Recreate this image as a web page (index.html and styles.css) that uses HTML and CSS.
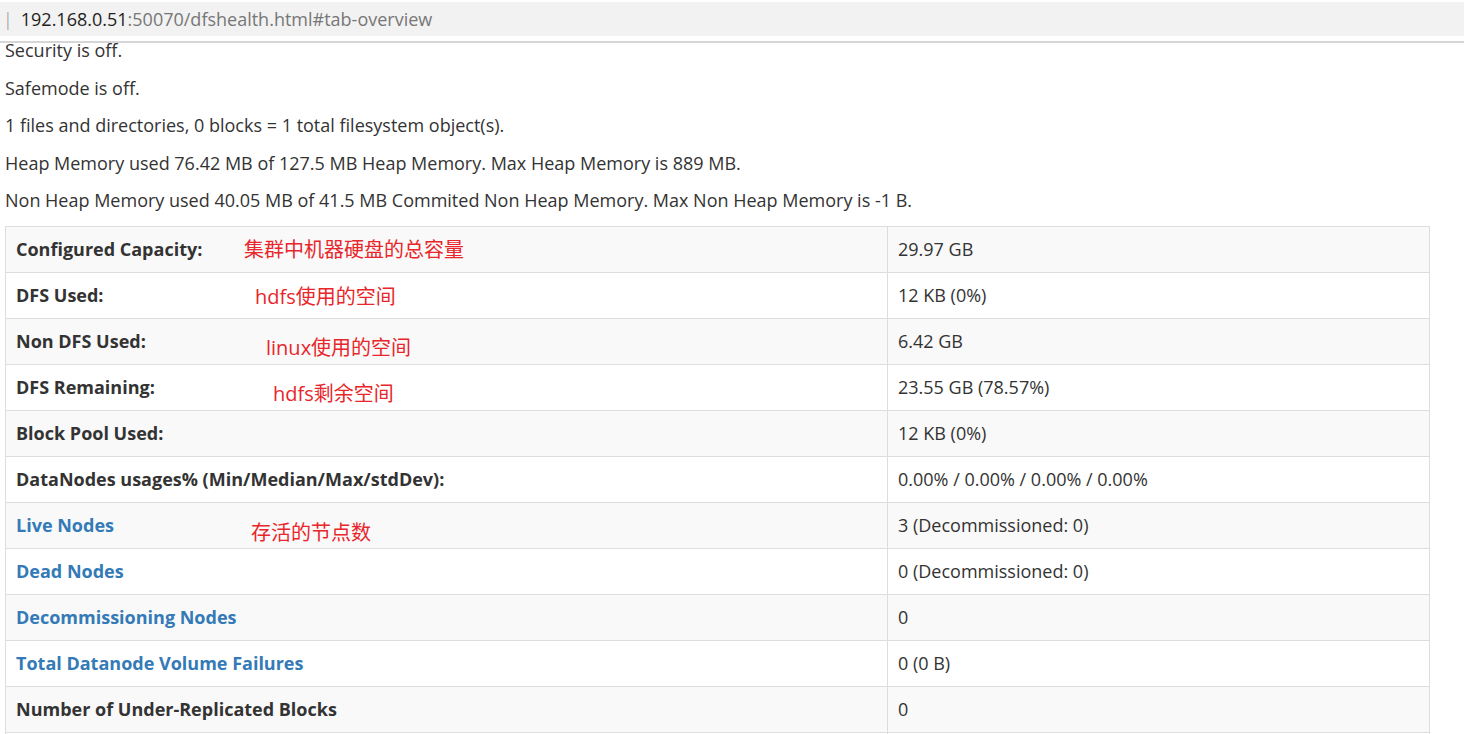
FILE: index.html
```html
<!DOCTYPE html>
<html lang="en">
<head>
    <meta charset="UTF-8">
    <meta name="viewport" content="width=device-width, initial-scale=1.0">
    <title>Namenode information</title>
    <link rel="stylesheet" href="styles.css">
</head>
<body>

    <div id="addressbar">
        <div class="url-field">
            <span class="caret">|</span>
            <span class="host">192.168.0.51</span><span class="path">:50070/dfshealth.html#tab-overview</span>
        </div>
    </div>

    <div id="viewport">
        <div id="overview">
            <p>Security is off.</p>
            <p>Safemode is off.</p>
            <p>1 files and directories, 0 blocks = 1 total filesystem object(s).</p>
            <p>Heap Memory used 76.42 MB of 127.5 MB Heap Memory. Max Heap Memory is 889 MB.</p>
            <p>Non Heap Memory used 40.05 MB of 41.5 MB Commited Non Heap Memory. Max Non Heap Memory is -1 B.</p>

            <div class="summary">
                <table class="table">
                    <tr><th>Configured Capacity:</th><td>29.97 GB</td></tr>
                    <tr><th>DFS Used:</th><td>12 KB (0%)</td></tr>
                    <tr><th>Non DFS Used:</th><td>6.42 GB</td></tr>
                    <tr><th>DFS Remaining:</th><td>23.55 GB (78.57%)</td></tr>
                    <tr><th>Block Pool Used:</th><td>12 KB (0%)</td></tr>
                    <tr><th>DataNodes usages% (Min/Median/Max/stdDev):</th><td>0.00% / 0.00% / 0.00% / 0.00%</td></tr>
                    <tr><th><a href="#tab-datanode">Live Nodes</a></th><td>3 (Decommissioned: 0)</td></tr>
                    <tr><th><a href="#tab-datanode">Dead Nodes</a></th><td>0 (Decommissioned: 0)</td></tr>
                    <tr><th><a href="#tab-datanode">Decommissioning Nodes</a></th><td>0</td></tr>
                    <tr><th><a href="#tab-datanode-volume-failures">Total Datanode Volume Failures</a></th><td>0 (0 B)</td></tr>
                    <tr><th>Number of Under-Replicated Blocks</th><td>0</td></tr>
                    <tr><th>Number of Blocks Pending Deletion</th><td>0</td></tr>
                </table>

                <!-- hand-written notes on the screenshot -->
                <span class="note" style="left: 239px; top: 11px;">集群中机器硬盘的总容量</span>
                <span class="note" style="left: 250px; top: 58px;">hdfs使用的空间</span>
                <span class="note" style="left: 261px; top: 109px;">linux使用的空间</span>
                <span class="note" style="left: 268px; top: 155px;">hdfs剩余空间</span>
                <span class="note" style="left: 246px; top: 294px;">存活的节点数</span>
            </div>
        </div>
    </div>

</body>
</html>
```

FILE: styles.css
```css
html, body {
    margin: 0;
    padding: 0;
    height: 100%;
    overflow: hidden;
    background-color: #fff;
}

body {
    font-family: 'Open Sans', 'Noto Sans CJK SC', sans-serif;
    font-size: 18px;
    line-height: 25px;
    color: #333;
}

#addressbar {
    height: 43px;
    padding-top: 2px;
    box-sizing: border-box;
    border-bottom: 2px solid #d6d6d6;
    background-color: #fff;
}

.url-field {
    height: 34px;
    background-color: #f2f2f2;
    display: flex;
    align-items: center;
    padding-left: 3px;
    font-size: 18px;
    white-space: nowrap;
}

.url-field .caret {
    color: #8c8c8c;
    margin-right: 8px;
    font-weight: 300;
}

.url-field .host {
    color: #222;
}

.url-field .path {
    color: #777;
}

#viewport {
    overflow: hidden;
    height: calc(100% - 43px);
}

#overview {
    margin-top: -5px;
    padding: 0 0 0 5px;
}

p {
    margin: 0 0 12.5px 0;
}

.summary {
    position: relative;
    width: 1425px;
}

.table {
    width: 100%;
    border-collapse: collapse;
    border: 1px solid #ddd;
}

.table th,
.table td {
    padding: 10px;
    border: 1px solid #ddd;
    text-align: left;
    vertical-align: top;
    line-height: 25px;
}

.table th {
    width: 861px;
    font-weight: bold;
}

.table tr:nth-child(odd) {
    background-color: #f9f9f9;
}

.table a {
    color: #337ab7;
    text-decoration: none;
}

.note {
    position: absolute;
    color: #e8262b;
    font-size: 20px;
    line-height: 26px;
    white-space: nowrap;
}
```
